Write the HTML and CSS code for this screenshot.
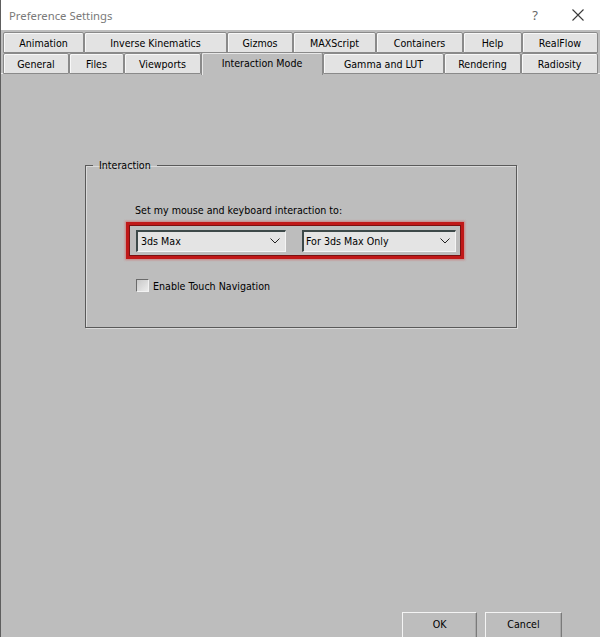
FILE: index.html
```html
<!DOCTYPE html>
<html>
<head>
<meta charset="utf-8">
<link rel="stylesheet" href="styles.css">
</head>
<body>
<div class="window">
  <div class="titlebar">
    <span class="title">Preference Settings</span>
    <span class="help">?</span>
    <svg class="close" width="14" height="14" viewBox="0 0 14 14"><path d="M1.5 1.5 L12.5 12.5 M12.5 1.5 L1.5 12.5" stroke="#3a3a3a" stroke-width="1.1" fill="none"/></svg>
  </div>
  <div class="tabs">
    <div class="tabrow">
      <div class="tab w-anim">Animation</div>
      <div class="tab w-ik">Inverse Kinematics</div>
      <div class="tab w-giz">Gizmos</div>
      <div class="tab w-max">MAXScript</div>
      <div class="tab w-cont">Containers</div>
      <div class="tab w-help">Help</div>
      <div class="tab w-rf">RealFlow</div>
    </div>
    <div class="tabrow front">
      <div class="tab w-gen">General</div>
      <div class="tab w-files">Files</div>
      <div class="tab w-vp">Viewports</div>
      <div class="tab active w-im">Interaction Mode</div>
      <div class="tab w-gam">Gamma and LUT</div>
      <div class="tab w-ren">Rendering</div>
      <div class="tab w-rad">Radiosity</div>
    </div>
  </div>
  <div class="panel">
    <fieldset class="group">
      <legend>Interaction</legend>
      <div class="prompt">Set my mouse and keyboard interaction to:</div>
      <div class="highlight">
        <div class="select s1"><span>3ds Max</span><svg width="10" height="6" viewBox="0 0 10 6"><path d="M0.5 0.5 L5 5 L9.5 0.5" stroke="#222" stroke-width="1" fill="none"/></svg></div>
        <div class="select s2"><span>For 3ds Max Only</span><svg width="10" height="6" viewBox="0 0 10 6"><path d="M0.5 0.5 L5 5 L9.5 0.5" stroke="#222" stroke-width="1" fill="none"/></svg></div>
      </div>
      <div class="check"><span class="box"></span><span>Enable Touch Navigation</span></div>
    </fieldset>
    <div class="buttons">
      <div class="btn ok">OK</div>
      <div class="btn cancel">Cancel</div>
    </div>
  </div>
</div>
</body>
</html>
```
FILE: styles.css
```css
html, body {
  margin: 0;
  padding: 0;
  background: #bdbdbd;
}
.window {
  width: 600px;
  height: 637px;
  display: flex;
  flex-direction: column;
  overflow: hidden;
  box-sizing: border-box;
  border-left: 1px solid #5e5e5e;
  background: #bdbdbd;
  font-family: "DejaVu Sans Condensed", "DejaVu Sans", sans-serif;
  font-size: 10.6px;
  color: #000;
}
.titlebar {
  height: 30px;
  background: #fff;
  display: flex;
  align-items: center;
  flex-shrink: 0;
}
.title {
  font-family: "Noto Sans", "Open Sans", sans-serif;
  font-size: 11.3px;
  color: #7a7a7a;
  margin-left: 8px;
  flex: 1;
}
.help {
  font-family: "Noto Sans", sans-serif;
  font-size: 13px;
  color: #666;
  margin-right: 33px;
}
.close {
  margin-right: 15px;
}
.tabs {
  padding: 2px 0 0 2px;
  flex-shrink: 0;
}
.tabrow {
  display: flex;
  height: 21px;
}
.tabrow.front {
  margin-bottom: -1px;
  position: relative;
  z-index: 2;
}
.tab {
  box-sizing: border-box;
  height: 21px;
  background: #e3e3e3;
  border: 1px solid #8a8a8a;
  border-radius: 2px 2px 0 0;
  box-shadow: inset 1px 1px 0 #f8f8f8;
  display: flex;
  align-items: center;
  justify-content: center;
  white-space: nowrap;
}
.tab.active {
  background: #bdbdbd;
  height: 23px;
  margin-top: -1px;
  border-bottom: none;
  box-shadow: inset 1px 1px 0 #e8e8e8;
  padding-bottom: 2px;
}
.w-anim { width: 81px; }
.w-ik { width: 143px; }
.w-giz { width: 66px; }
.w-max { width: 83px; }
.w-cont { width: 87px; }
.w-help { width: 59px; }
.w-rf { width: 76px; }
.w-gen { width: 66px; }
.w-files { width: 55px; }
.w-vp { width: 77px; }
.w-im { width: 122px; }
.w-gam { width: 121px; }
.w-ren { width: 77px; }
.w-rad { width: 77px; }

.panel {
  flex: 1;
  display: flex;
  flex-direction: column;
  border-top: 1px solid #ececec;
  position: relative;
  z-index: 1;
}
.group {
  margin: 85px 0 0 84px;
  width: 432px;
  height: 169px;
  box-sizing: border-box;
  padding: 0;
  border: 1px solid #5a5a5a;
  box-shadow: 1px 1px 0 #dadada, inset 1px 1px 0 #dadada;
  min-width: 0;
}
.group legend {
  margin-left: 7px;
  padding: 0 6px;
  line-height: 13px;
}
.prompt {
  margin: 32px 0 0 49px;
  line-height: 13px;
}
.highlight {
  margin: 5px 0 0 40px;
  width: 338px;
  box-sizing: border-box;
  border: 3px solid #c01818;
  box-shadow: 0 0 2px 1px rgba(220, 60, 60, 0.45), inset 0 0 0 1px #7a1010;
  padding: 5px 5px 4px 7px;
  display: flex;
  gap: 16px;
}
.select {
  box-sizing: border-box;
  height: 22px;
  background: #e4e4e4;
  border-top: 2px solid #3d4949;
  border-left: 2px solid #3d4949;
  border-right: 1px solid #f4f4f4;
  border-bottom: 1px solid #f4f4f4;
  display: flex;
  align-items: center;
  justify-content: space-between;
  padding: 0 5px 1px 3px;
}
.s1 { width: 150px; }
.s2 { width: 154px; padding-left: 2px; }
.check {
  margin: 20px 0 0 50px;
  display: flex;
  align-items: center;
  gap: 4px;
}
.box {
  width: 13px;
  height: 13px;
  box-sizing: border-box;
  border-top: 1px solid #6a6a6a;
  border-left: 1px solid #6a6a6a;
  border-right: 1px solid #f2f2f2;
  border-bottom: 1px solid #f2f2f2;
  background: linear-gradient(135deg, #c8c8c8, #ececec);
}
.buttons {
  margin-top: auto;
  margin-bottom: -3px;
  display: flex;
  justify-content: flex-end;
  gap: 8px;
  padding-right: 38px;
}
.btn {
  box-sizing: border-box;
  height: 28px;
  border-top: 1px solid #f4f4f4;
  border-left: 1px solid #f4f4f4;
  border-right: 1px solid #7a7a7a;
  box-shadow: inset -1px 0 0 #a8a8a8;
  display: flex;
  justify-content: center;
  padding-top: 5px;
}
.ok { width: 75px; }
.cancel { width: 77px; }
```
